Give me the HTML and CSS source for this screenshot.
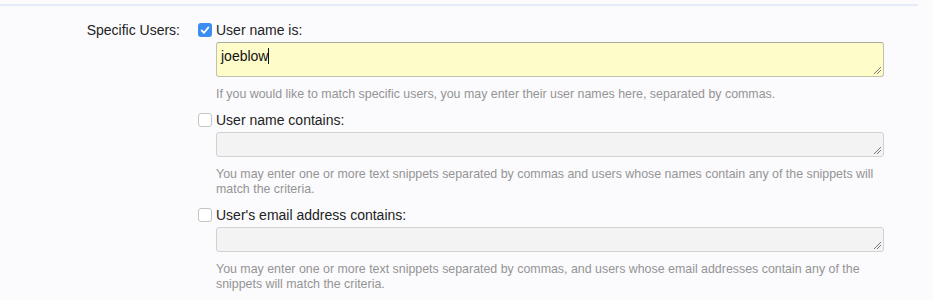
FILE: index.html
```html
<!DOCTYPE html>
<html>
<head>
<meta charset="utf-8">
<link rel="stylesheet" href="styles.css">
</head>
<body>
<div class="topline"></div>
<div class="row">
  <div class="label">Specific Users:</div>
  <div class="controls">
    <div class="item">
      <label class="check"><span class="box on"><svg viewBox="0 0 14 14" width="14" height="14"><path d="M3.6 7.4 L6 9.8 L10.4 4.4" fill="none" stroke="#fff" stroke-width="1.7" stroke-linecap="round" stroke-linejoin="round"/></svg></span><span class="ltext">User name is:</span></label>
      <div class="ta ta-active"><span class="val">joeblow</span><span class="caret"></span><span class="grip"></span></div>
      <p class="help">If you would like to match specific users, you may enter their user names here, separated by commas.</p>
    </div>
    <div class="item">
      <label class="check"><span class="box"></span><span class="ltext">User name contains:</span></label>
      <div class="ta"><span class="grip"></span></div>
      <p class="help">You may enter one or more text snippets separated by commas and users whose names contain any of the snippets will match the criteria.</p>
    </div>
    <div class="item">
      <label class="check"><span class="box"></span><span class="ltext">User's email address contains:</span></label>
      <div class="ta"><span class="grip"></span></div>
      <p class="help">You may enter one or more text snippets separated by commas, and users whose email addresses contain any of the snippets will match the criteria.</p>
    </div>
  </div>
</div>
</body>
</html>
```
FILE: styles.css
```css
html, body {
  margin: 0;
  padding: 0;
  background: #fbfbfd;
  font-family: "Liberation Sans", Arial, sans-serif;
  color: #222;
}
.topline {
  margin-top: 4px;
  width: 918px;
  height: 2px;
  background: #e4edf7;
}
.row {
  display: grid;
  grid-template-columns: 180px 686px;
  column-gap: 18px;
  padding-top: 15px;
}
.label {
  text-align: right;
  font-size: 14px;
  line-height: 18px;
  color: #222;
}
.item {
  margin-bottom: 9px;
}
.check {
  display: flex;
  align-items: center;
  height: 18px;
  font-size: 14px;
  line-height: 18px;
}
.box {
  box-sizing: border-box;
  width: 14px;
  height: 14px;
  border: 1px solid #c4c4c4;
  border-radius: 3px;
  background: #fff;
  margin-right: 4px;
  display: flex;
}
.box.on {
  border: none;
  background: #3b8ef0;
}
.ta {
  position: relative;
  box-sizing: border-box;
  margin: 3px 0 0 18px;
  height: 25px;
  border: 1px solid #d2d2d2;
  border-radius: 3px;
  background: #f3f3f3;
}
.ta-active {
  height: 35px;
  background: #fefcc9;
  border-color: #c2c1ae;
  border-top-color: #a9a996;
  padding: 4px 0 0 4px;
  font-size: 14px;
  line-height: 18px;
  display: flex;
  align-items: flex-start;
}
.val { color: #111; }
.caret {
  display: inline-block;
  width: 1px;
  height: 16px;
  margin-top: 1px;
  background: #111;
}
.grip {
  position: absolute;
  right: 2px;
  bottom: 2px;
  width: 7px;
  height: 7px;
  background:
    linear-gradient(135deg, transparent 45%, #777 45%, #777 55%, transparent 55%) 0 0 / 7px 7px no-repeat,
    linear-gradient(135deg, transparent 45%, #777 45%, #777 55%, transparent 55%) 3px 3px / 4px 4px no-repeat;
}
.help {
  margin: 10px 0 0 18px;
  font-size: 12.4px;
  line-height: 15px;
  color: #949494;
  width: 662px;
}
```
